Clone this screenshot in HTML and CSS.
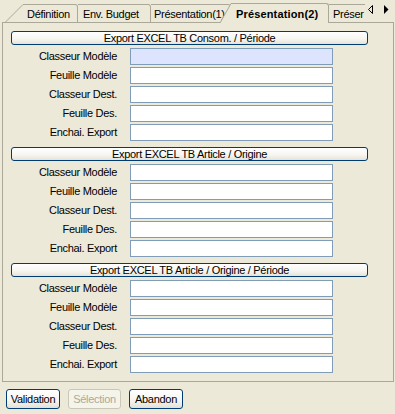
FILE: index.html
```html
<!DOCTYPE html>
<html lang="fr">
<head>
<meta charset="utf-8">
<link rel="stylesheet" href="styles.css">
</head>
<body>
<div class="tabbar">
  <div class="lead"></div>
  <svg class="slant-first" width="18" height="23" viewBox="0 0 18 23">
    <polygon points="0,22.5 18,4.5 18,22.5" fill="#ece9d8"/>
    <line x1="0" y1="22.5" x2="18" y2="22.5" stroke="#aca899"/>
    <line x1="0.5" y1="22" x2="18" y2="4.5" stroke="#aca899"/>
  </svg>
  <div class="tab t1">Définition</div>
  <div class="tab t2">Env. Budget</div>
  <div class="tab t3">Présentation(1)</div>
  <div class="active">
    <svg class="slant-active" width="11" height="23" viewBox="0 0 11 23">
      <polygon points="0,23 11,3.5 11,23" fill="#ece9d8"/>
      <line x1="0" y1="23" x2="11" y2="3.5" stroke="#aca899"/>
    </svg>
    <div class="active-box">Présentation(2)</div>
  </div>
  <div class="tab t5">Préser</div>
  <div class="arrows">
    <svg width="28" height="16" viewBox="0 0 28 16">
      <polygon points="7.5,4.5 3.5,8.5 7.5,12.5" fill="none" stroke="#000"/>
      <polygon points="19,4 23.5,8.5 19,13" fill="#000"/>
    </svg>
  </div>
</div>

<div class="panel">
  <section class="group">
    <div class="header">Export EXCEL TB Consom. / Période</div>
    <div class="fields">
      <label class="lbl">Classeur Modèle</label><div class="input focused"></div>
      <label class="lbl">Feuille Modèle</label><div class="input"></div>
      <label class="lbl">Classeur Dest.</label><div class="input"></div>
      <label class="lbl">Feuille Des.</label><div class="input"></div>
      <label class="lbl">Enchai. Export</label><div class="input"></div>
    </div>
  </section>
  <section class="group">
    <div class="header">Export EXCEL TB Article / Origine</div>
    <div class="fields">
      <label class="lbl">Classeur Modèle</label><div class="input"></div>
      <label class="lbl">Feuille Modèle</label><div class="input"></div>
      <label class="lbl">Classeur Dest.</label><div class="input"></div>
      <label class="lbl">Feuille Des.</label><div class="input"></div>
      <label class="lbl">Enchai. Export</label><div class="input"></div>
    </div>
  </section>
  <section class="group">
    <div class="header">Export EXCEL TB Article / Origine / Période</div>
    <div class="fields">
      <label class="lbl">Classeur Modèle</label><div class="input"></div>
      <label class="lbl">Feuille Modèle</label><div class="input"></div>
      <label class="lbl">Classeur Dest.</label><div class="input"></div>
      <label class="lbl">Feuille Des.</label><div class="input"></div>
      <label class="lbl">Enchai. Export</label><div class="input"></div>
    </div>
  </section>
</div>

<div class="footer">
  <div class="btn b-valid">Validation</div>
  <div class="btn b-sel disabled">Sélection</div>
  <div class="btn b-aband">Abandon</div>
</div>
</body>
</html>
```

FILE: styles.css
```css
html, body {
  margin: 0;
  padding: 0;
  background: #ece9d8;
}
body {
  width: 395px;
  height: 414px;
  overflow: hidden;
  font-family: "Liberation Sans", Arial, sans-serif;
  font-size: 11px;
  letter-spacing: -0.3px;
  color: #000;
}

/* ---------- tabs ---------- */
.tabbar {
  display: flex;
  align-items: flex-end;
  height: 23px;
  margin: 0 1px 0 2px;
}
.lead {
  width: 3px;
  height: 1px;
  background: #aca899;
  flex: none;
}
.slant-first,
.slant-active {
  display: block;
  flex: none;
}
.tab {
  flex: none;
  box-sizing: border-box;
  height: 19px;
  border-top: 1px solid #aca899;
  border-right: 1px solid #aca899;
  border-bottom: 1px solid #aca899;
  border-top-right-radius: 3px;
  line-height: 16px;
  padding-top: 1px;
  white-space: nowrap;
  overflow: hidden;
  background: #ece9d8;
}
.t1 { width: 55px; padding-left: 4px; }
.t2 { width: 73px; padding-left: 5px; }
.t3 { width: 80px; padding-left: 3px; }
.t5 {
  width: 36px;
  padding-left: 4px;
  border-right: none;
  border-radius: 0;
}
.active {
  flex: none;
  display: flex;
  align-items: flex-end;
  margin-left: -11px;
  position: relative;
  z-index: 1;
}
.active-box {
  box-sizing: border-box;
  width: 98px;
  height: 20px;
  border-top: 1px solid #aca899;
  border-right: 1px solid #aca899;
  border-top-right-radius: 3px;
  background: #ece9d8;
  font-weight: bold;
  letter-spacing: 0.15px;
  line-height: 16px;
  padding: 2px 0 0 5px;
  white-space: nowrap;
}
.arrows {
  flex: 1;
  align-self: stretch;
  box-sizing: border-box;
  border-bottom: 1px solid #aca899;
  display: flex;
  align-items: flex-start;
}
.arrows svg { display: block; margin-top: 1px; }

/* ---------- panel ---------- */
.panel {
  margin: 0 1px 0 2px;
  border: 1px solid #aca899;
  border-top: none;
  padding: 8px 25px 8px 8px;
  display: flex;
  flex-direction: column;
  gap: 6px;
}
.group {
  display: flex;
  flex-direction: column;
  gap: 3px;
}
.header {
  box-sizing: border-box;
  height: 14px;
  border: 1px solid #003c74;
  border-radius: 3px;
  background: linear-gradient(to bottom, #ffffff 0%, #f7f6f1 55%, #e6e3d8 100%);
  text-align: center;
  line-height: 12px;
  white-space: nowrap;
}
.fields {
  display: grid;
  grid-template-columns: 106px 203px;
  column-gap: 13px;
  row-gap: 2px;
}
.lbl {
  text-align: right;
  line-height: 17px;
  height: 17px;
  white-space: nowrap;
}
.input {
  box-sizing: border-box;
  height: 17px;
  border: 1px solid #7f9db9;
  background: #fff;
}
.input.focused { background: #dce5fd; }

/* ---------- footer ---------- */
.footer {
  display: flex;
  padding: 7px 6px 0 6px;
}
.btn {
  box-sizing: border-box;
  height: 20px;
  border: 1px solid #003c74;
  border-radius: 3px;
  background: linear-gradient(to bottom, #ffffff 0%, #f5f4ef 60%, #e3e0d5 100%);
  text-align: center;
  line-height: 18px;
  white-space: nowrap;
}
.b-valid { width: 54px; }
.b-sel { width: 53px; margin-left: 8px; }
.b-aband { width: 54px; margin-left: 8px; }
.btn.disabled {
  border-color: #c9c7ba;
  background: #f5f4ea;
  color: #aca899;
}
```
